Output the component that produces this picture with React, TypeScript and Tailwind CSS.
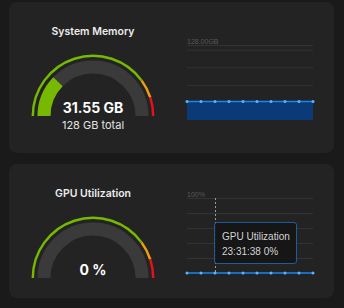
import React from 'react';

const GREEN = '#76b900';

// point on a half circle, f = 0 at the left end, 1 at the right end
const pt = (cx: number, cy: number, r: number, f: number) => {
  const a = Math.PI * (1 - f);
  return [cx + r * Math.cos(a), cy - r * Math.sin(a)];
};

const arc = (r: number, f1: number, f2: number) => {
  const [x1, y1] = pt(65, 63, r, f1);
  const [x2, y2] = pt(65, 63, r, f2);
  return `M ${x1} ${y1} A ${r} ${r} 0 0 1 ${x2} ${y2}`;
};

const Gauge: React.FC<{ value: number; label: string; sub?: string }> = ({ value, label, sub }) => (
  <div className="relative w-[130px] h-[64px] mt-[13px]">
    <svg width="130" height="64" viewBox="0 0 130 64">
      <path d={arc(60.2, 0, 0.8)} stroke={GREEN} strokeWidth="2.5" fill="none" />
      <path d={arc(60.2, 0.8, 0.9)} stroke="#f0a00c" strokeWidth="2.5" fill="none" />
      <path d={arc(60.2, 0.9, 1)} stroke="#e5121c" strokeWidth="2.5" fill="none" />
      <path d={arc(49, 0, 1)} stroke="#3a3a3a" strokeWidth="13" fill="none" />
      {value > 0 && <path d={arc(49, 0, value)} stroke={GREEN} strokeWidth="13" fill="none" />}
    </svg>
    <div className="absolute left-0 right-0 top-[45px] text-center text-[14px] leading-5 font-bold text-white">
      {label}
    </div>
    {sub && (
      <div className="absolute left-0 right-0 top-[64px] text-center text-[11px] leading-4 text-[#e2e2e2]">
        {sub}
      </div>
    )}
  </div>
);

const dotsX = [0, 14, 28, 42, 56, 70, 84, 98, 112, 126];

const Chart: React.FC<{ top: string; grid: number[]; value: number; fill?: boolean; cursor?: boolean }> = ({
  top,
  grid,
  value,
  fill,
  cursor,
}) => {
  const y = 84 - value * 75;
  return (
    <div className="relative w-[126px] h-[84px]">
      <svg width="126" height="84" viewBox="0 0 126 84" overflow="visible">
        <text x="0" y="7.5" fontSize="7" fill="#585858" fontFamily="'Liberation Sans', sans-serif">
          {top}
        </text>
        {grid.map((g) => (
          <line key={g} x1="0" x2="126" y1={84 - g * 75 + 0.5} y2={84 - g * 75 + 0.5} stroke="#333" strokeWidth="1" />
        ))}
        {fill && <rect x="0" y={y} width="126" height={84 - y} fill="#0b3a78" />}
        {cursor && <line x1="28.5" x2="28.5" y1="9" y2="84" stroke="#9a9a9a" strokeWidth="1" strokeDasharray="2 2" />}
        <line x1="0" x2="126" y1={y} y2={y} stroke="#1a86f0" strokeWidth="1.5" />
        {dotsX.map((x) => (
          <circle key={x} cx={x} cy={y} r="1.5" fill="#5cb2ff" />
        ))}
      </svg>
      {cursor && (
        <div className="absolute left-[27px] top-[33px] w-[83px] h-[42px] rounded-[3px] border border-[#1d5d9e] bg-[#151515]/90 pl-[7px] pt-[6px] text-[10px] leading-[15px] text-[#d4d4d4] font-['Liberation_Sans',sans-serif]">
          <div>GPU Utilization</div>
          <div>23:31:38 0%</div>
        </div>
      )}
    </div>
  );
};

export default function App() {
  return (
    <div className="w-[344px] h-[308px] bg-[#1a1a1a] pt-[2px] pl-[9px] pr-[10px] flex flex-col gap-[11px] font-['Inter',sans-serif] overflow-hidden">
      <div className="flex h-[151px] rounded-lg bg-[#232323]">
        <div className="w-[168px] flex flex-col items-center pt-[22px]">
          <h2 className="text-[10.5px] leading-4 font-semibold text-[#ececec]">System Memory</h2>
          <Gauge value={31.55 / 128} label="31.55 GB" sub="128 GB total" />
        </div>
        <div className="ml-[10px] flex items-center">
          <Chart top="128.00GB" grid={[1, 120 / 128, 90 / 128, 60 / 128, 30 / 128]} value={31.55 / 128} fill />
        </div>
      </div>
      <div className="flex h-[134px] rounded-lg bg-[#232323]">
        <div className="w-[168px] flex flex-col items-center pt-[22px]">
          <h2 className="text-[10.5px] leading-4 font-semibold text-[#ececec]">GPU Utilization</h2>
          <Gauge value={0} label="0 %" />
        </div>
        <div className="ml-[10px] flex items-center">
          <Chart top="100%" grid={[1, 0.8, 0.6, 0.4, 0.2]} value={0} cursor />
        </div>
      </div>
    </div>
  );
}
